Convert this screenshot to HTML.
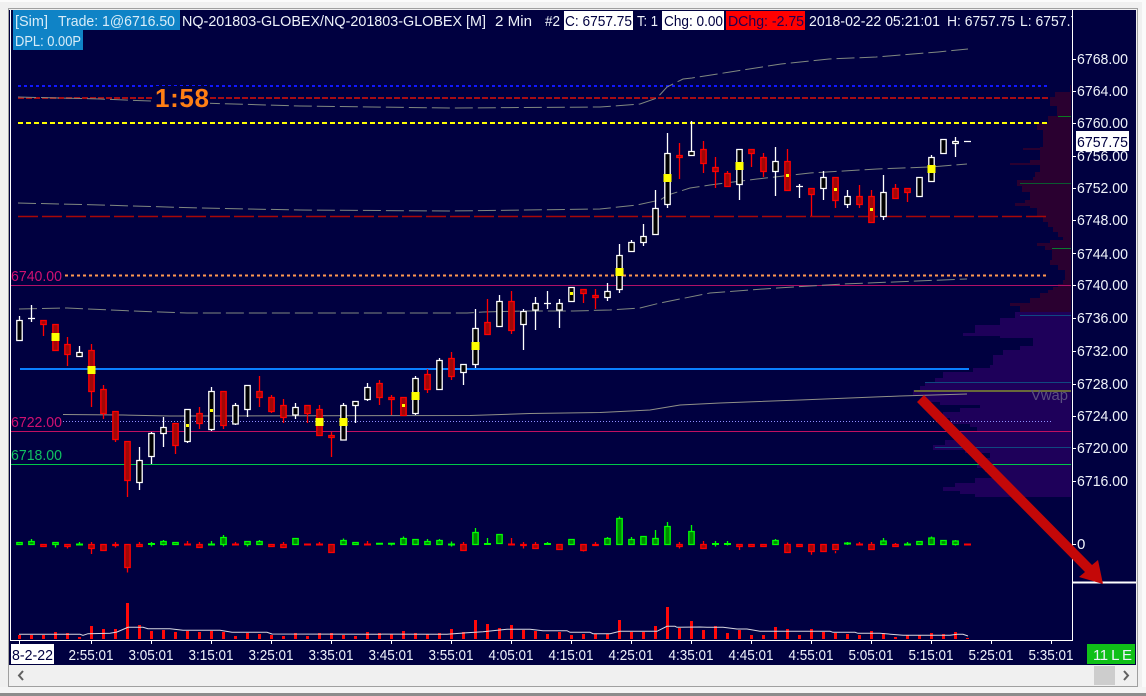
<!DOCTYPE html>
<html>
<head>
<meta charset="utf-8">
<style>
html,body{margin:0;padding:0;background:#f0f0f0;width:1146px;height:696px;overflow:hidden}
svg{display:block;font-family:"Liberation Sans",sans-serif}
text{font-size:15px;fill:#eef2fa}
</style>
</head>
<body>
<svg width="1146" height="696" viewBox="0 0 1146 696" xmlns="http://www.w3.org/2000/svg">
<defs><clipPath id="hc"><rect x="10" y="10" width="1062" height="42"/></clipPath></defs>
<!-- window -->
<rect width="1146" height="696" fill="#f0f0f0"/>
<rect x="0" y="0" width="1146" height="2" fill="#fbfbfb"/>
<rect x="1142" y="0" width="4" height="696" fill="#fafafa"/>
<rect x="8.500" y="8.500" width="1129" height="678" fill="none" stroke="#a0a0a0"/>
<rect x="0" y="693" width="1146" height="3" fill="#8c8c8c"/>
<rect x="0" y="687" width="1146" height="6" fill="#f4f4f4"/>
<rect x="9" y="10" width="1127" height="655" fill="#000040"/>

<!-- volume profile -->
<polygon fill="#2a0030" points="1071,85 1070,85 1070,92 1055,92 1055,97 1050,97 1050,106 1057,106 1057,116 1048,116 1048,123 1037,123 1037,130 1043,130 1043,147 1040,147 1040,148 1023,148 1023,150 1040,150 1040,160 1030,160 1030,163 1010,163 1010,165 1040,165 1040,172 1035,172 1035,177 1033,177 1033,180 1017,180 1017,186 1022,186 1022,192 1030,192 1030,200 1025,200 1025,203 1015,203 1015,206 1030,206 1030,208 1037,208 1037,217 1043,217 1043,222 1048,222 1048,227 1053,227 1053,232 1058,232 1058,237 1063,237 1063,240 1050,240 1050,243 1037,243 1037,246 1045,246 1045,250 1052,250 1052,260 1050,260 1050,265 1058,265 1058,270 1065,270 1065,280 1063,280 1063,284 1058,284 1058,287 1053,287 1053,290 1048,290 1048,293 1040,293 1040,298 1030,298 1030,303 1010,303 1010,306 1020,306 1020,313 1071,313"/>
<polygon fill="#1e005a" points="1071,312 1015,312 1015,318 1000,318 1000,325 975,325 975,333 963,333 963,336 1000,336 1000,338 1033,338 1033,346 1020,346 1020,350 1003,350 1003,355 993,355 993,365 990,365 990,368 973,368 973,372 943,372 943,378 935,378 935,382 925,382 925,386 920,386 920,390 913,390 913,396 925,396 925,402 940,402 940,405 980,405 980,408 960,408 960,412 943,412 943,418 950,418 950,424 970,424 970,427 977,427 977,431 960,431 960,435 957,435 957,440 945,440 945,445 933,445 933,450 965,450 965,453 990,453 990,458 975,458 975,462 977,462 977,468 985,468 985,472 993,472 993,478 975,478 975,483 955,483 955,487 943,487 943,491 960,491 960,494 975,494 975,497 1071,497"/>
<g fill="none" stroke-width="1">
<path d="M1058 116.500H1071" stroke="#0a7a20"/>
<path d="M1020 183.500H1071" stroke="#0a5a30"/>
<path d="M1052 248.500H1071" stroke="#0a7a30"/>
<path d="M1020 315.500H1071" stroke="#104880"/>
<path d="M925 382.500H1071" stroke="#104880"/>
<path d="M935 447.500H1071" stroke="#104880"/>
</g>

<!-- levels -->
<g fill="none">
<path d="M18 86H1048" stroke="#1018ff" stroke-width="2" stroke-dasharray="3 3"/>
<path d="M18 98H1048" stroke="#a80c14" stroke-width="2" stroke-dasharray="6 2"/>
<path d="M18 123H1049" stroke="#ffff00" stroke-width="2" stroke-dasharray="5 3"/>
<path d="M18 216.500H1046" stroke="#a80808" stroke-width="1.500" stroke-dasharray="20 4"/>
<path d="M65 275.500H1048" stroke="#ff9850" stroke-width="2" stroke-dasharray="3 3"/>
<path d="M10 285.500H1071" stroke="#b01068"/>
<path d="M20 369H969" stroke="#0a80ff" stroke-width="2"/>
<path d="M914 391H1071" stroke="#68683a" stroke-width="2"/>
<path d="M63 421.500H1053" stroke="#9090ff" stroke-dasharray="1 2"/>
<path d="M10 431.500H1071" stroke="#c01060"/>
<path d="M10 464.500H1071" stroke="#00c848"/>
<!-- bands -->
<path d="M18 97L100 99L200 103L300 106L450 108L600 107L640 104L657 98L667 87L683 79L692 78L730 72L781 64L829 59L876 57L938 52L968 49" stroke="#808880" stroke-dasharray="18 5"/>
<path d="M18 203L100 205L200 208L300 210L450 211L600 209L637 205L660 200L668 195L690 188L710 185L757 179L810 173L877 169L930 167L967 164" stroke="#808880" stroke-dasharray="18 5"/>
<path d="M19 309L67 308L133 311L187 313L467 313L483 312L523 311L573 311L610 310L640 308L660 303L680 299L710 293L777 288L843 284L967 279" stroke="#808880" stroke-dasharray="18 5"/>
<path d="M63 414.500L123 415L170 416L470 415.500L530 413.500L600 412.500L650 410L680 405L720 403L800 400L900 396L967 394" stroke="#909088"/>
</g>
<rect x="154" y="86" width="56" height="24" fill="#000040"/>

<!-- candle wicks -->
<path fill="none" stroke="#fff" stroke-width="1.300" d="M19.500 316V321M31.500 305V322M28 318.500H35M79.500 346V353M139.500 447V490M151.500 432V464M163.500 417V447M187.500 441V443M211.500 387V431M235.500 403V425M247.500 409V417M295.500 403V419M343.500 403V406M355.500 405V423M367.500 383V401M415.500 376V415M439.500 358V390M463.500 372V385M475.500 309V368M499.500 295V302M523.500 309V350M535.500 297V330M547.500 291V309M544 303.500H551M559.500 299V328M607.500 283V301M619.500 244V293M631.500 240V243M643.500 224V246M655.500 190V209M667.500 133V208M691.500 121V152M739.500 184V200M775.500 147V196M799.500 184V198M796 186.500H803M823.500 171V200M847.500 190V208M883.500 175V220M931.500 155V158M955.500 137V157M952 142.500H959M964 141.500H971"/>
<path fill="none" stroke="#f00" stroke-width="1.300" d="M43.500 324V336M67.500 337V366M91.500 344V407M103.500 385V419M115.500 439V442M127.500 480V497M175.500 445V454M199.500 407V429M223.500 425V429M259.500 376V407M271.500 395V413M283.500 399V423M307.500 413V423M319.500 405V410M331.500 432V457M379.500 380V405M391.500 395V415M427.500 369V393M451.500 352V380M487.500 299V323M511.500 291V334M583.500 293V303M595.500 289V309M679.500 143V179M703.500 141V173M715.500 157V188M727.500 171V174M751.500 153V167M763.500 153V177M787.500 149V162M811.500 194V216M835.500 200V208M859.500 185V208M871.500 190V197M895.500 184V189M907.500 192V202"/>
<!-- white bodies -->
<path fill="#000" stroke="#fff" stroke-width="1.300" d="M16.800 320.500h5.400v20h-5.400zM76.800 352.500h5.400v4h-5.400zM136.800 460.500h5.400v22h-5.400zM148.800 433.500h5.400v23h-5.400zM160.800 427.500h5.400v6h-5.400zM184.800 409.500h5.400v32h-5.400zM208.800 391.500h5.400v38h-5.400zM232.800 405.500h5.400v18.500h-5.400zM244.800 385.500h5.400v24h-5.400zM292.800 407.500h5.400v7.500h-5.400zM340.800 405.500h5.400v34.500h-5.400zM352.800 401.500h5.400v4h-5.400zM364.800 387.500h5.400v12h-5.400zM412.800 378.500h5.400v35h-5.400zM436.800 360.500h5.400v29h-5.400zM460.800 364.500h5.400v8h-5.400zM472.800 328.500h5.400v36h-5.400zM496.800 301.500h5.400v25h-5.400zM520.800 311.500h5.400v13h-5.400zM532.800 303.500h5.400v6.500h-5.400zM556.800 303.500h5.400v6.500h-5.400zM568.800 287.500h5.400v14h-5.400zM604.800 291.500h5.400v6h-5.400zM616.800 255.500h5.400v34h-5.400zM628.800 242.500h5.400v9h-5.400zM640.800 236.500h5.400v6h-5.400zM652.800 208.500h5.400v26h-5.400zM664.800 153.500h5.400v51h-5.400zM688.800 151.500h5.400v4h-5.400zM736.800 149.500h5.400v35h-5.400zM772.800 161.500h5.400v10h-5.400zM820.800 177.500h5.400v11h-5.400zM844.800 196.500h5.400v8h-5.400zM880.800 192.500h5.400v24h-5.400zM916.800 177.500h5.400v19h-5.400zM928.800 157.500h5.400v24h-5.400zM940.800 139.500h5.400v14h-5.400zM952.800 141.500h5.400v2h-5.400z"/>
<!-- red bodies -->
<path fill="#a00808" stroke="#f00" stroke-width="1.300" d="M40.800 320.500h5.400v4h-5.400zM52.800 324.500h5.400v26h-5.400zM64.800 344.500h5.400v10h-5.400zM88.800 350.500h5.400v41h-5.400zM100.800 389.500h5.400v24h-5.400zM112.800 411.500h5.400v28h-5.400zM124.800 441.500h5.400v39h-5.400zM172.800 423.500h5.400v22h-5.400zM196.800 413.500h5.400v10h-5.400zM220.800 391.500h5.400v34h-5.400zM256.800 391.500h5.400v6h-5.400zM268.800 397.500h5.400v14h-5.400zM280.800 405.500h5.400v12h-5.400zM304.800 405.500h5.400v8h-5.400zM316.800 409.500h5.400v26h-5.400zM328.800 435.500h5.400v2h-5.400zM376.800 383.500h5.400v14h-5.400zM388.800 397.500h5.400v2h-5.400zM400.800 397.500h5.400v18h-5.400zM424.800 374.500h5.400v15h-5.400zM448.800 358.500h5.400v18h-5.400zM484.800 322.500h5.400v12h-5.400zM508.800 301.500h5.400v29h-5.400zM580.800 289.500h5.400v4h-5.400zM592.800 295.500h5.400v2h-5.400zM676.800 155.500h5.400v2h-5.400zM700.800 149.500h5.400v14h-5.400zM712.800 167.500h5.400v4h-5.400zM724.800 173.500h5.400v13h-5.400zM748.800 149.500h5.400v4h-5.400zM760.800 157.500h5.400v14h-5.400zM784.800 161.500h5.400v29h-5.400zM808.800 188.500h5.400v6h-5.400zM832.800 177.500h5.400v23h-5.400zM856.800 196.500h5.400v8h-5.400zM868.800 196.500h5.400v26h-5.400zM892.800 188.500h5.400v10h-5.400zM904.800 188.500h5.400v4h-5.400z"/>
<!-- yellow markers -->
<path fill="#ffff00" d="M51.500 333h8v8h-8zM87.500 366h8v8h-8zM315.500 418h8v8h-8zM339.500 418h8v8h-8zM411.500 392h8v8h-8zM471.500 342h8v8h-8zM615.500 268h8v8h-8zM663.500 174h8v8h-8zM735.500 162h8v8h-8zM927.500 165h8v8h-8z"/>
<path fill="#ffff00" d="M186 424h3v3h-3zM210 409h3v3h-3zM402 404h3v3h-3zM570 292h3v3h-3zM786 174h3v3h-3zM834 188h3v3h-3zM870 208h3v3h-3z"/>

<!-- delta row: wicks -->
<path fill="none" stroke="#00ff00" stroke-width="1.300" d="M31.500 539V542M55.500 544V547.500M79.500 542V545M151.500 542V546.500M163.500 540V545.500M211.500 541V545M223.500 535V538M223.500 544V546.500M247.500 544V546.500M259.500 540V542M343.500 538.500V541M391.500 544V545.500M403.500 536.500V539M427.500 539V541M439.500 539V541M451.500 541.500V546.500M475.500 528V533M487.500 538V544M547.500 542V545M607.500 537V539M619.500 516.500V519M631.500 537V540M655.500 530V539M667.500 522V527M691.500 525V532M715.500 541V546.500M727.500 541V545.500M775.500 539V541M847.500 542V545M883.500 538V541M907.500 542V545M931.500 536.500V538M955.500 540V545.500"/>
<path fill="none" stroke="#f00" stroke-width="1.300" d="M67.500 544V548.500M91.500 542V554M115.500 542V547.500M127.500 567V572.500M139.500 542V545M187.500 541V545M199.500 542V545M235.500 542V545M283.500 542V545M319.500 542V545M367.500 541V545M463.500 542V545M511.500 538V545M523.500 542V548.500M535.500 542V545M583.500 550V551.500M595.500 542V545M679.500 542V548.500M703.500 541V545M739.500 544V550M787.500 542.500V545M811.500 551V554.700M835.500 551V553.300M859.500 542V545M871.500 542V545M895.500 543V545"/>
<!-- delta green bodies -->
<path fill="#008a00" stroke="#00ff00" stroke-width="1.300" d="M16.800 542.500h5.400v2h-5.400zM28.800 541.500h5.400v3h-5.400zM52.800 542.500h5.400v2h-5.400zM160.800 541.500h5.400v3h-5.400zM172.800 542.500h5.400v2h-5.400zM220.800 537.500h5.400v7h-5.400zM244.800 541.500h5.400v3h-5.400zM256.800 541.500h5.400v3h-5.400zM292.800 538.500h5.400v6h-5.400zM340.800 540.500h5.400v4h-5.400zM352.800 542.500h5.400v2h-5.400zM400.800 538.500h5.400v6h-5.400zM412.800 539.500h5.400v5h-5.400zM424.800 541.500h5.400v3h-5.400zM436.800 540.500h5.400v4h-5.400zM472.800 532.500h5.400v12h-5.400zM496.800 534.500h5.400v9h-5.400zM568.800 539.500h5.400v5h-5.400zM604.800 538.500h5.400v6h-5.400zM616.800 518.500h5.400v26h-5.400zM628.800 539.500h5.400v5h-5.400zM640.800 536.500h5.400v8h-5.400zM652.800 538.500h5.400v6h-5.400zM664.800 526.500h5.400v18h-5.400zM688.800 531.500h5.400v13h-5.400zM772.800 540.500h5.400v4h-5.400zM880.800 541h5.400v3.500h-5.400zM916.800 541.500h5.400v3h-5.400zM928.800 538h5.400v6.500h-5.400zM940.800 540.500h5.400v4h-5.400zM952.800 541h5.400v3.500h-5.400z"/>
<path fill="none" stroke="#00ff00" stroke-width="2" d="M76 544.500h7M148 544h7M208 544.500h7M376 543.800h7M388 543.800h7M448 544.500h7M484 544h7M544 544h7M712 544h7M724 544h7M844 543.500h7M904 544.500h7"/>
<!-- delta red bodies -->
<path fill="#a00808" stroke="#f00" stroke-width="1.300" d="M40.800 544.500h5.400v2h-5.400zM64.800 544.500h5.400v2h-5.400zM88.800 544.500h5.400v4h-5.400zM100.800 544.500h5.400v6h-5.400zM112.800 544.500h5.400v1h-5.400zM124.800 544.500h5.400v23h-5.400zM136.800 544.500h5.400v2h-5.400zM196.800 544.500h5.400v3h-5.400zM268.800 544.500h5.400v2h-5.400zM280.800 544.500h5.400v3h-5.400zM328.800 544.500h5.400v8h-5.400zM460.800 544.500h5.400v6h-5.400zM520.800 544.500h5.400v1h-5.400zM532.800 544.500h5.400v4h-5.400zM556.800 544.500h5.400v5h-5.400zM580.800 544.500h5.400v6h-5.400zM592.800 544.500h5.400v1h-5.400zM676.800 544.500h5.400v2h-5.400zM700.800 544.500h5.400v4h-5.400zM736.800 544.500h5.400v2h-5.400zM748.800 544.500h5.400v2h-5.400zM760.800 544.500h5.400v2h-5.400zM784.800 544.500h5.400v8h-5.400zM796.800 544.500h5.400v2h-5.400zM808.800 544.500h5.400v7h-5.400zM820.800 544.500h5.400v7h-5.400zM832.800 544.500h5.400v5h-5.400zM868.800 544.500h5.400v5h-5.400zM892.800 544.500h5.400v2h-5.400z"/>
<path fill="none" stroke="#f00" stroke-width="2" d="M184 544.500h7M232 544.500h7M304 544.500h7M316 544.500h7M364 544.500h7M508 544.500h7M856 544.500h7M964 544.500h7"/>

<!-- volume bars -->
<path fill="none" stroke="#ff0808" stroke-width="3" d="M19.500 639V635M31.500 639V635M43.500 639V635M55.500 639V632M67.500 639V633M79.500 639V637M91.500 639V626M103.500 639V629M115.500 639V629M127.500 639V603M139.500 639V625M151.500 639V631M163.500 639V630M175.500 639V632M187.500 639V631M199.500 639V632M211.500 639V631M223.500 639V632M235.500 639V636M247.500 639V633M259.500 639V634M271.500 639V635M283.500 639V636M295.500 639V633M307.500 639V636M319.500 639V633M331.500 639V633M343.500 639V635M355.500 639V636M367.500 639V632M379.500 639V633M391.500 639V634M403.500 639V631M415.500 639V633M427.500 639V634M439.500 639V633M451.500 639V629M463.500 639V632M475.500 639V620M487.500 639V624M499.500 639V628M511.500 639V625M523.500 639V630M535.500 639V631M547.500 639V634M559.500 639V632M571.500 639V635M583.500 639V634M595.500 639V634M607.500 639V634M619.500 639V620M631.500 639V632M643.500 639V632M655.500 639V626M667.500 639V607M679.500 639V628M691.500 639V621M703.500 639V630M715.500 639V626M727.500 639V633M739.500 639V630M751.500 639V635M763.500 639V635M775.500 639V627M787.500 639V629M799.500 639V635M811.500 639V629M823.500 639V632M835.500 639V633M847.500 639V634M859.500 639V635M871.500 639V631M883.500 639V633M895.500 639V637M907.500 639V635M919.500 639V635M931.500 639V633M943.500 639V634M955.500 639V632M967.500 639V638"/>
<path fill="none" stroke="#d8d8e0" stroke-width="1" d="M19 634.300L80 634.300L83 635.300L88 633.700L110 633.300L117 632L128 627.300L143 627.300L148 628.700L170 628.700L183 630.300L220 630.300L232 632.300L267 632.300L272 634L447 634.300L467 632.700L483 631.700L507 629.300L530 629.300L543 630.700L567 630.700L570 632.300L590 632.300L593 633.700L610 633.700L620 631.300L657 631.300L667 626.300L675 626.300L677 627.300L700 627L707 627.300L723 627.300L737 629L747 629L760 631.300L830 631.300L833 632.300L855 632.300L858 633.300L880 633.300L903 635.300L950 635.300L957 634.300L963 634.300L968 636"/>

<!-- axes -->
<g fill="none" stroke="#fff">
<path d="M10.500 10V640.500H1072.500V10"/>
<path d="M1072 582.500H1136" stroke-width="2"/>
<path d="M1073 59.500h3M1073 91.500h3M1073 123.500h3M1073 156.500h3M1073 188.500h3M1073 220.500h3M1073 253.500h3M1073 285.500h3M1073 318.500h3M1073 351.500h3M1073 384.500h3M1073 416.500h3M1073 448.500h3M1073 481.500h3M1073 544.500h3"/>
<path d="M19.500 641v3M91.500 641v3M151.500 641v3M211.500 641v3M271.500 641v3M331.500 641v3M391.500 641v3M451.500 641v3M511.500 641v3M571.500 641v3M631.500 641v3M691.500 641v3M751.500 641v3M811.500 641v3M871.500 641v3M931.500 641v3M991.500 641v3M1051.500 641v3"/>
</g>

<!-- header -->
<rect x="13" y="10" width="167" height="20" fill="#0f83c6"/>
<rect x="13" y="30" width="70" height="20" fill="#0f83c6"/>
<rect x="564" y="11" width="69" height="19" fill="#fff"/>
<rect x="662" y="11" width="62" height="19" fill="#fff"/>
<rect x="726" y="11" width="79" height="19" fill="#ff0000"/>
<g clip-path="url(#hc)">
<text x="15" y="26" textLength="33" lengthAdjust="spacingAndGlyphs" style="fill:#d8ecf8">[Sim]</text>
<text x="58" y="26" textLength="117" lengthAdjust="spacingAndGlyphs" style="fill:#d8ecf8">Trade: 1@6716.50</text>
<text x="15" y="46" textLength="66" lengthAdjust="spacingAndGlyphs" style="fill:#d8ecf8">DPL: 0.00P</text>
<text x="182" y="26" textLength="304" lengthAdjust="spacingAndGlyphs">NQ-201803-GLOBEX/NQ-201803-GLOBEX [M]</text>
<text x="495" y="26" textLength="37" lengthAdjust="spacingAndGlyphs">2 Min</text>
<text x="545" y="26" textLength="15" lengthAdjust="spacingAndGlyphs">#2</text>
<text x="565" y="26" textLength="67" lengthAdjust="spacingAndGlyphs" style="fill:#000040">C: 6757.75</text>
<text x="637" y="26" textLength="21" lengthAdjust="spacingAndGlyphs">T: 1</text>
<text x="664" y="26" textLength="59" lengthAdjust="spacingAndGlyphs" style="fill:#000040">Chg: 0.00</text>
<text x="728" y="26" textLength="76" lengthAdjust="spacingAndGlyphs" style="fill:#200050">DChg: -2.75</text>
<text x="809" y="26" textLength="131" lengthAdjust="spacingAndGlyphs">2018-02-22 05:21:01</text>
<text x="947" y="26" textLength="68" lengthAdjust="spacingAndGlyphs">H: 6757.75</text>
<text x="1020" y="26" textLength="66" lengthAdjust="spacingAndGlyphs">L: 6757.75</text>
</g>
<text x="155" y="107" textLength="54" style="font-size:26px;font-weight:bold;fill:#ff7f14">1:58</text>

<!-- left labels -->
<text x="11" y="281" textLength="51" lengthAdjust="spacingAndGlyphs" style="fill:#d01070">6740.00</text>
<text x="11" y="427" textLength="51" lengthAdjust="spacingAndGlyphs" style="fill:#d01070">6722.00</text>
<text x="11" y="460" textLength="51" lengthAdjust="spacingAndGlyphs" style="fill:#10c060">6718.00</text>
<text x="1031" y="400" textLength="37" lengthAdjust="spacingAndGlyphs" style="fill:#5c5080">Vwap</text>

<!-- axis labels -->
<g>
<text x="1077" y="64" textLength="51" lengthAdjust="spacingAndGlyphs">6768.00</text>
<text x="1077" y="96" textLength="51" lengthAdjust="spacingAndGlyphs">6764.00</text>
<text x="1077" y="128" textLength="51" lengthAdjust="spacingAndGlyphs">6760.00</text>
<text x="1077" y="161" textLength="51" lengthAdjust="spacingAndGlyphs">6756.00</text>
<text x="1077" y="193" textLength="51" lengthAdjust="spacingAndGlyphs">6752.00</text>
<text x="1077" y="225" textLength="51" lengthAdjust="spacingAndGlyphs">6748.00</text>
<text x="1077" y="259" textLength="51" lengthAdjust="spacingAndGlyphs">6744.00</text>
<text x="1077" y="290" textLength="51" lengthAdjust="spacingAndGlyphs">6740.00</text>
<text x="1077" y="323" textLength="51" lengthAdjust="spacingAndGlyphs">6736.00</text>
<text x="1077" y="356" textLength="51" lengthAdjust="spacingAndGlyphs">6732.00</text>
<text x="1077" y="389" textLength="51" lengthAdjust="spacingAndGlyphs">6728.00</text>
<text x="1077" y="421" textLength="51" lengthAdjust="spacingAndGlyphs">6724.00</text>
<text x="1077" y="453" textLength="51" lengthAdjust="spacingAndGlyphs">6720.00</text>
<text x="1077" y="486" textLength="51" lengthAdjust="spacingAndGlyphs">6716.00</text>
<text x="1077" y="549">0</text>
</g>
<rect x="1076" y="131" width="53" height="20" fill="#fff"/>
<text x="1077" y="147" textLength="51" lengthAdjust="spacingAndGlyphs" style="fill:#000040">6757.75</text>

<!-- time labels -->
<rect x="11" y="644" width="43" height="20" fill="#fff"/>
<text x="12" y="660" textLength="41" lengthAdjust="spacingAndGlyphs" style="fill:#000040">8-2-22</text>
<g>
<text x="68.500" y="660" textLength="45" lengthAdjust="spacingAndGlyphs">2:55:01</text>
<text x="128.500" y="660" textLength="45" lengthAdjust="spacingAndGlyphs">3:05:01</text>
<text x="188.500" y="660" textLength="45" lengthAdjust="spacingAndGlyphs">3:15:01</text>
<text x="248.500" y="660" textLength="45" lengthAdjust="spacingAndGlyphs">3:25:01</text>
<text x="308.500" y="660" textLength="45" lengthAdjust="spacingAndGlyphs">3:35:01</text>
<text x="368.500" y="660" textLength="45" lengthAdjust="spacingAndGlyphs">3:45:01</text>
<text x="428.500" y="660" textLength="45" lengthAdjust="spacingAndGlyphs">3:55:01</text>
<text x="488.500" y="660" textLength="45" lengthAdjust="spacingAndGlyphs">4:05:01</text>
<text x="548.500" y="660" textLength="45" lengthAdjust="spacingAndGlyphs">4:15:01</text>
<text x="608.500" y="660" textLength="45" lengthAdjust="spacingAndGlyphs">4:25:01</text>
<text x="668.500" y="660" textLength="45" lengthAdjust="spacingAndGlyphs">4:35:01</text>
<text x="728.500" y="660" textLength="45" lengthAdjust="spacingAndGlyphs">4:45:01</text>
<text x="788.500" y="660" textLength="45" lengthAdjust="spacingAndGlyphs">4:55:01</text>
<text x="848.500" y="660" textLength="45" lengthAdjust="spacingAndGlyphs">5:05:01</text>
<text x="908.500" y="660" textLength="45" lengthAdjust="spacingAndGlyphs">5:15:01</text>
<text x="968.500" y="660" textLength="45" lengthAdjust="spacingAndGlyphs">5:25:01</text>
<text x="1028.500" y="660" textLength="45" lengthAdjust="spacingAndGlyphs">5:35:01</text>
</g>
<rect x="1087" y="644" width="48" height="20" fill="#10c018"/>
<text x="1093" y="660" textLength="39">11 L E</text>

<!-- scrollbar -->
<rect x="10" y="665" width="1126" height="21" fill="#f0f0f0"/>
<rect x="1094" y="666" width="21" height="19" fill="#cdcdcd"/>
<path d="M23 671l-4 4.500 4 4.500M1124 671l4 4.500-4 4.500" fill="none" stroke="#606060" stroke-width="2"/>

<!-- red arrow -->
<polygon fill="#c40808" points="917,402 924,395 1092,565 1098,560 1103,584 1079,577 1085,572"/>
</svg>
</body>
</html>
